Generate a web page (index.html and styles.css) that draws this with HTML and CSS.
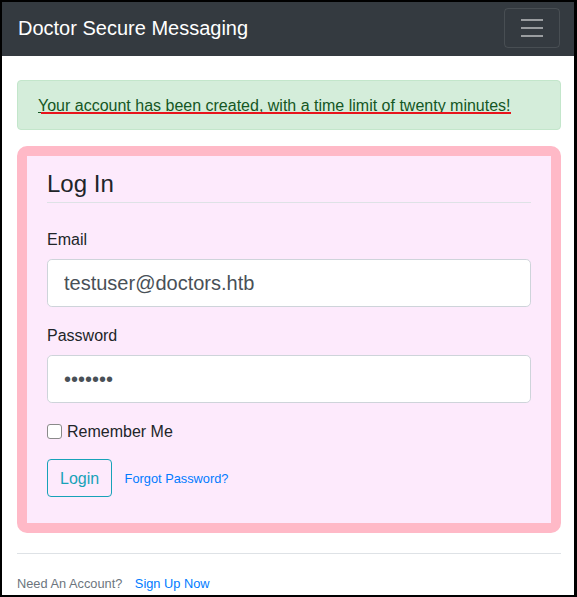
FILE: index.html
```html
<!DOCTYPE html>
<html lang="en">
<head>
<meta charset="utf-8">
<title>Doctor Secure Messaging</title>
<link rel="stylesheet" href="styles.css">
</head>
<body>
<div class="frame">
  <nav class="navbar">
    <a class="brand" href="#">Doctor Secure Messaging</a>
    <button class="toggler" type="button" aria-label="Toggle navigation">
      <svg width="30" height="30" viewBox="0 0 30 30" aria-hidden="true">
        <path d="M4 7h22M4 15h22M4 23h22" stroke="rgba(255,255,255,0.5)" stroke-width="2" stroke-linecap="butt" fill="none"/>
      </svg>
    </button>
  </nav>
  <main class="container">
    <div class="alert"><span class="alert-text">Your account has been created, with a time limit of twenty minutes!</span></div>
    <div class="content-section">
      <form>
        <fieldset class="fieldset">
          <legend class="legend">Log In</legend>
          <div class="form-group">
            <label class="label" for="email">Email</label>
            <input class="input" id="email" type="text" value="testuser@doctors.htb">
          </div>
          <div class="form-group">
            <label class="label" for="password">Password</label>
            <input class="input" id="password" type="password" value="1234567">
          </div>
          <div class="form-check">
            <input class="checkbox" id="remember" type="checkbox">
            <label class="check-label" for="remember">Remember Me</label>
          </div>
        </fieldset>
        <div class="form-group">
          <button class="btn" type="button">Login</button>
          <small class="muted forgot"><a class="link" href="#">Forgot Password?</a></small>
        </div>
      </form>
    </div>
    <div class="footer">
      <small class="muted">Need An Account? <a class="link signup" href="#">Sign Up Now</a></small>
    </div>
  </main>
</div>
</body>
</html>
```
FILE: styles.css
```css
html, body {
  margin: 0;
  padding: 0;
}
body {
  font-family: "Liberation Sans", Arial, sans-serif;
  font-size: 16px;
  line-height: 1.5;
  color: #212529;
  background: #fff;
}
.frame {
  width: 577px;
  height: 597px;
  box-sizing: border-box;
  border: 2px solid #000;
  border-right-width: 3px;
  overflow: hidden;
  background: #fff;
}
.navbar {
  display: flex;
  justify-content: space-between;
  align-items: center;
  background: #343a40;
  padding: 6px 14px 8px 16px;
}
.brand {
  color: #fff;
  text-decoration: none;
  font-size: 20px;
  line-height: 30px;
  padding: 5px 0;
}
.toggler {
  display: block;
  width: 56px;
  height: 40px;
  box-sizing: border-box;
  padding: 4px 12px;
  background: transparent;
  border: 1px solid rgba(255,255,255,0.1);
  border-radius: 4px;
}
.toggler svg {
  display: block;
}
.container {
  padding: 24px 13px 0 15px;
}
.alert {
  background: #d4edda;
  border: 1px solid #c3e6cb;
  color: #155724;
  border-radius: 4px;
  padding: 13px 20px 11px;
  margin-bottom: 16px;
}
.alert-text {
  position: relative;
  text-decoration: underline;
}
.alert-text::after {
  content: "";
  position: absolute;
  left: 3px;
  right: 0;
  bottom: 0;
  height: 2px;
  background: #e8141c;
}
.content-section {
  background: #fdeafc;
  border: 10px solid #ffb9c7;
  border-radius: 10px;
  padding: 10px 20px;
  margin-bottom: 20px;
}
.fieldset {
  border: 0;
  margin: 0 0 16px;
  padding: 0;
  min-width: 0;
}
.legend {
  display: block;
  width: 100%;
  padding: 0;
  font-size: 24px;
  line-height: 36px;
  border-bottom: 1px solid #dee2e6;
  margin-bottom: 24px;
}
.form-group {
  margin-bottom: 16px;
}
.label {
  display: inline-block;
  padding-top: 1px;
  margin-bottom: 7px;
}
.input {
  display: block;
  width: 100%;
  height: 48px;
  box-sizing: border-box;
  padding: 8px 16px;
  font-family: "Liberation Sans", Arial, sans-serif;
  font-size: 20px;
  line-height: 1.5;
  color: #495057;
  background: #fff;
  border: 1px solid #ced4da;
  border-radius: 4.8px;
  margin: 0;
}
.form-check {
  display: flex;
  align-items: flex-start;
}
.checkbox {
  appearance: none;
  -webkit-appearance: none;
  width: 15px;
  height: 15px;
  box-sizing: border-box;
  margin: 5px 5px 0 0;
  border: 1px solid #8a8a8a;
  border-radius: 3px;
  background: #fff;
}
.check-label {
  line-height: 23px;
  padding-top: 1px;
}
.btn {
  font-family: "Liberation Sans", Arial, sans-serif;
  font-size: 16px;
  line-height: 24px;
  padding: 7px 12px 5px;
  color: #17a2b8;
  background: transparent;
  border: 1px solid #17a2b8;
  border-radius: 4px;
  vertical-align: middle;
}
.muted {
  color: #6c757d;
  font-size: 12.8px;
}
.forgot {
  margin-left: 8px;
  vertical-align: -1px;
}
.link {
  color: #007bff;
  text-decoration: none;
}
.signup {
  margin-left: 9px;
}
.footer {
  border-top: 1px solid #dee2e6;
  padding-top: 17px;
}
```
